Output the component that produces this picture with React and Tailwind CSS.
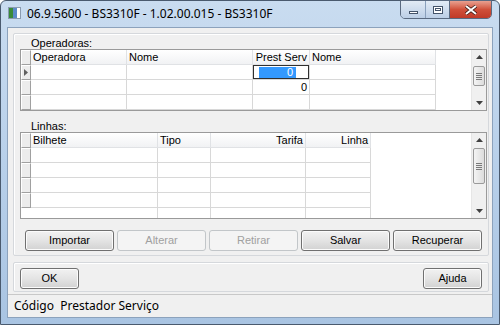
import React from "react";

const ui = { fontFamily: "'Liberation Sans', Arial, sans-serif" };

function Btn({ label, w = "w-[89px]", disabled }) {
  return (
    <div
      className={`${w} h-[21px] rounded-[3px] border flex items-center justify-center text-[11px] ${
        disabled
          ? "border-[#c2c6c9] bg-[#f4f4f4] text-[#a0a0a0]"
          : "border-[#707070] bg-gradient-to-b from-[#f2f2f2] via-[#e4e4e4] to-[#d2d2d2] text-black shadow-[inset_0_0_0_1px_#fbfbfb]"
      }`}
    >
      {label}
    </div>
  );
}

function Scroll({ h, thumbTop, thumbH }) {
  return (
    <div className="w-[15px] flex flex-col bg-[#f0f0f0] border-l border-[#e6e6e6]" style={{ height: h }}>
      <div className="h-[14px] flex items-center justify-center">
        <svg width="7" height="4" viewBox="0 0 7 4"><path d="M0 4 L3.5 0 L7 4 Z" fill="#404040" /></svg>
      </div>
      <div className="flex-1 relative">
        <div
          className="absolute left-[1px] right-[1px] rounded-[2px] border border-[#9a9a9a] bg-gradient-to-r from-[#f4f4f4] to-[#dcdcdc] flex flex-col items-center justify-center gap-[1px]"
          style={{ top: thumbTop, height: thumbH }}
        >
          <div className="w-[6px] h-px bg-[#7a7a7a]" />
          <div className="w-[6px] h-px bg-[#7a7a7a]" />
          <div className="w-[6px] h-px bg-[#7a7a7a]" />
          <div className="w-[6px] h-px bg-[#7a7a7a]" />
        </div>
      </div>
      <div className="h-[14px] flex items-center justify-center">
        <svg width="7" height="4" viewBox="0 0 7 4"><path d="M0 0 L3.5 4 L7 0 Z" fill="#404040" /></svg>
      </div>
    </div>
  );
}

function Ind({ arrow }) {
  return (
    <div className="w-[10px] shrink-0 h-full bg-[#ececec] border-t border-l border-white border-r border-b border-r-[#a0a0a0] border-b-[#a0a0a0] flex items-center justify-center">
      {arrow && (
        <svg width="4" height="7" viewBox="0 0 4 7"><path d="M0 0 L4 3.5 L0 7 Z" fill="#606060" /></svg>
      )}
    </div>
  );
}

export default function App() {
  const g1cols = [
    { w: "w-[96px]", label: "Operadora" },
    { w: "w-[126px]", label: "Nome" },
    { w: "w-[57px]", label: "Prest Serv", right: true },
    { w: "w-[126px]", label: "Nome" },
  ];
  const g2cols = [
    { w: "w-[127px]", label: "Bilhete" },
    { w: "w-[53px]", label: "Tipo" },
    { w: "w-[95px]", label: "Tarifa", right: true },
    { w: "w-[65px]", label: "Linha", right: true },
  ];

  return (
    <div className="w-[500px] h-[325px] overflow-hidden" style={ui}>
      <div className="w-[500px] h-[325px] rounded-t-[6px] border border-[#4a5a6e] bg-gradient-to-b from-[#c9dcf0] via-[#b8d0ea] to-[#a9c4e2] flex flex-col">
        {/* title bar */}
        <div className="h-[26px] flex items-start relative">
          <div className="ml-[7px] mt-[6px] w-[13px] h-[12px] border border-[#8a9bb0] bg-white flex">
            <div className="w-[4px] bg-[#3a8a3a]" />
            <div className="w-[4px] bg-[#5a8ac8]" />
          </div>
          <div className="ml-[6px] mt-[4px] text-[12px] text-black whitespace-nowrap" style={{ fontFamily: "'Noto Sans', 'Open Sans', sans-serif" }}>
            06.9.5600 - BS3310F - 1.02.00.015 - BS3310F
          </div>
          <div className="absolute right-[7px] top-[-1px] flex h-[19px] rounded-b-[5px] border border-[#5a6a80] overflow-hidden">
            <div className="w-[25px] bg-gradient-to-b from-[#e2ebf5] to-[#bccfe6] border-r border-[#8aa0bc] flex items-center justify-center">
              <div className="w-[9px] h-[3px] bg-white border border-[#44546a] mt-[5px]" />
            </div>
            <div className="w-[24px] bg-gradient-to-b from-[#e2ebf5] to-[#bccfe6] border-r border-[#5a6a80] flex items-center justify-center">
              <div className="w-[10px] h-[8px] border border-[#44546a] bg-white flex items-center justify-center">
                <div className="w-[6px] h-[3px] border border-[#44546a]" />
              </div>
            </div>
            <div className="w-[41px] bg-gradient-to-b from-[#e8a090] via-[#d0503a] to-[#c03a28] flex items-center justify-center">
              <svg width="12" height="10" viewBox="0 0 12 10">
                <path d="M1 1 L11 9 M11 1 L1 9" stroke="#3a1a14" strokeWidth="3.4" />
                <path d="M1 1 L11 9 M11 1 L1 9" stroke="white" strokeWidth="2" />
              </svg>
            </div>
          </div>
        </div>

        {/* client */}
        <div className="mx-[6px] h-[291px] bg-[#f0f0f0] border border-[#8ca2bc] flex flex-col">
          {/* main group */}
          <div className="ml-[5px] mr-[3px] mt-[5px] h-[223px] shrink-0 border border-[#d5d8dc] rounded-[2px] shadow-[inset_1px_1px_0_white] flex flex-col">
            <div className="ml-[17px] mt-[1px] h-[14px] text-[11px] text-black">Operadoras:</div>
            {/* grid 1 */}
            <div className="ml-[6px] mr-[1px] h-[62px] bg-white border border-[#9a9a9a] flex">
              <div className="flex-1 flex flex-col">
                <div className="h-[15px] flex">
                  <Ind />
                  {g1cols.map((c, i) => (
                    <div
                      key={i}
                      className={`${c.w} shrink-0 h-full bg-gradient-to-b from-white to-[#f1f2f4] border-r border-b border-[#e0e2e5] text-[11px] leading-[14px] px-[2px] whitespace-nowrap overflow-hidden ${c.right ? "text-right" : ""}`}
                    >
                      {c.label}
                    </div>
                  ))}
                </div>
                {[0, 1, 2].map((r) => (
                  <div key={r} className="h-[15px] flex">
                    <Ind arrow={r === 0} />
                    {g1cols.map((c, i) => (
                      <div key={i} className={`${c.w} shrink-0 h-full border-r border-b border-[#d8d8d8] text-[11px] leading-[14px] text-right whitespace-nowrap overflow-hidden`}>
                        {i === 2 && r === 0 && (
                          <div className="h-full border-[1.5px] border-[#303030] flex items-center justify-end pr-[12px]">
                            <span className="bg-[#3399ff] text-white pl-[28px] pr-[3px] leading-[11px]">0</span>
                          </div>
                        )}
                        {i === 2 && r === 1 && <span className="pr-[2px]">0</span>}
                      </div>
                    ))}
                  </div>
                ))}
              </div>
              <Scroll h={60} thumbTop={2} thumbH={20} />
            </div>

            <div className="ml-[17px] mt-[7px] h-[14px] text-[11px] text-black">Linhas:</div>
            {/* grid 2 */}
            <div className="ml-[6px] mr-[1px] h-[87px] bg-white border border-[#9a9a9a] flex overflow-hidden">
              <div className="flex-1 flex flex-col">
                <div className="h-[15px] flex">
                  <Ind />
                  {g2cols.map((c, i) => (
                    <div
                      key={i}
                      className={`${c.w} shrink-0 h-full bg-gradient-to-b from-white to-[#f1f2f4] border-r border-b border-[#e0e2e5] text-[11px] leading-[14px] px-[2px] whitespace-nowrap overflow-hidden ${c.right ? "text-right" : ""}`}
                    >
                      {c.label}
                    </div>
                  ))}
                </div>
                {[0, 1, 2, 3, 4].map((r) => (
                  <div key={r} className="h-[15px] flex shrink-0">
                    {r < 4 ? <Ind /> : <div className="w-[10px]" />}
                    {g2cols.map((c, i) => (
                      <div key={i} className={`${c.w} shrink-0 h-full border-r border-b border-[#d8d8d8]`} />
                    ))}
                  </div>
                ))}
              </div>
              <Scroll h={85} thumbTop={1} thumbH={36} />
            </div>

            <div className="mt-[11px] ml-[11px] flex gap-[3px]">
              <Btn label="Importar" />
              <Btn label="Alterar" disabled />
              <Btn label="Retirar" disabled />
              <Btn label="Salvar" />
              <Btn label="Recuperar" />
            </div>
          </div>

          {/* bottom group */}
          <div className="ml-[5px] mr-[3px] mt-[6px] h-[30px] shrink-0 border border-[#d5d8dc] rounded-[2px] shadow-[inset_1px_1px_0_white] flex items-start justify-between px-[6px] pt-[5px]">
            <Btn label="OK" w="w-[59px]" />
            <Btn label="Ajuda" w="w-[59px]" />
          </div>

          {/* status bar */}
          <div className="mt-[2px] flex-1 border-t border-[#c8c8c8] flex items-center pl-[6px] text-[12px] text-black whitespace-nowrap" style={{ fontFamily: "'Noto Sans', 'Open Sans', sans-serif" }}>
            Código&nbsp; Prestador Serviço
          </div>
        </div>
      </div>
    </div>
  );
}
